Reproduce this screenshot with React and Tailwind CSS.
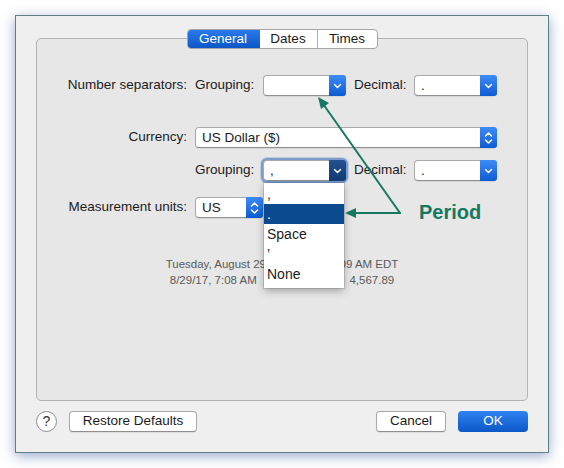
import React from "react";

const font = { fontFamily: '"Helvetica Neue", "Liberation Sans", Arial, sans-serif' };

function Chevron() {
  return (
    <svg width="9" height="6" viewBox="0 0 9 6">
      <polyline points="1.5,1.5 4.5,4.5 7.5,1.5" fill="none" stroke="white" strokeWidth="1.5" strokeLinecap="round" strokeLinejoin="round" />
    </svg>
  );
}

function Stepper() {
  return (
    <svg width="9" height="14" viewBox="0 0 9 14">
      <polyline points="1.5,5 4.5,2 7.5,5" fill="none" stroke="white" strokeWidth="1.5" strokeLinecap="round" strokeLinejoin="round" />
      <polyline points="1.5,9 4.5,12 7.5,9" fill="none" stroke="white" strokeWidth="1.5" strokeLinecap="round" strokeLinejoin="round" />
    </svg>
  );
}

function Popup({ value, width, stepper, focused, children }) {
  return (
    <div
      className={`relative flex h-[21px] rounded-[4px] border border-[#a9a9a9] border-b-[#8f8f8f] bg-white ${width} ${
        focused
          ? "shadow-[0_0_0_2px_#7d9ccb,0_0_0_3px_rgba(125,156,203,0.35)]"
          : "shadow-[0_1px_1px_rgba(0,0,0,0.08)]"
      }`}
    >
      <div className="flex-1 pl-[6px] text-[13.5px] leading-[19px] text-[#1b1b1b]">{value}</div>
      <div
        className={`-my-px -mr-px flex w-[17px] items-center justify-center rounded-r-[3px] ${
          focused ? "bg-gradient-to-b from-[#23508f] to-[#123a74]" : "bg-gradient-to-b from-[#3d8cf7] to-[#0b5bd3]"
        }`}
      >
        {stepper ? <Stepper /> : <Chevron />}
      </div>
      {children}
    </div>
  );
}

function Menu() {
  const items = [",", ".", "Space", "\u2019", "None"];
  return (
    <div className="absolute left-0 top-[22px] z-20 w-[80px] bg-white pt-px pb-[4px] shadow-[0_3px_8px_rgba(0,0,0,0.3),0_0_0_1px_rgba(0,0,0,0.12)]">
      {items.map((it, i) => (
        <div
          key={it}
          className={`h-5 pl-[3px] text-[14px] leading-5 ${i === 1 ? "bg-[#0c4a8f] text-white" : "text-[#1b1b1b]"}`}
        >
          {it}
        </div>
      ))}
    </div>
  );
}

function Button({ children, primary, className = "" }) {
  return (
    <div
      className={`flex h-[21px] items-center justify-center rounded-[4px] text-[13.5px] ${
        primary
          ? "bg-gradient-to-b from-[#2f82f2] to-[#0a57c7] text-white"
          : "border border-[#a9a9a9] border-b-[#8f8f8f] bg-white text-[#1b1b1b] shadow-[0_1px_1px_rgba(0,0,0,0.08)]"
      } ${className}`}
    >
      {children}
    </div>
  );
}

export default function App() {
  return (
    <div className="relative h-[468px] w-[564px] overflow-hidden bg-white" style={font}>
      {/* dialog window */}
      <div className="ml-[15px] mt-[15px] flex h-[438px] w-[534px] flex-col border border-[#5e7f85] bg-[#efefef] px-[20px] pt-[13px] shadow-[0_3px_12px_rgba(70,100,160,0.55)]">
        {/* segmented tabs */}
        <div className="relative z-10 flex justify-center">
          <div className="flex h-5 overflow-hidden rounded-[4px] border border-[#a5a5a5] bg-white text-[13.5px] leading-[18px]">
            <div className="-my-px -ml-px w-[73px] bg-gradient-to-b from-[#2a7cf0] to-[#0a55c3] pt-px text-center text-white">General</div>
            <div className="w-[58px] border-r border-[#b0b0b0] text-center text-[#1b1b1b]">Dates</div>
            <div className="w-[59px] text-center text-[#1b1b1b]">Times</div>
          </div>
        </div>

        {/* group box */}
        <div className="relative -mt-[11px] h-[363px] rounded-[5px] border border-[#b3b3b3] bg-[#e7e7e7] pt-[36px] text-[13.5px] text-[#1b1b1b]">
          <div className="flex items-center">
            <div className="w-[150px] text-right">Number separators:</div>
            <div className="ml-[8px] w-[59px] text-right">Grouping:</div>
            <div className="ml-[9px]"><Popup value="" width="w-[83px]" /></div>
            <div className="ml-[8px] w-[52px]">Decimal:</div>
            <div className="ml-[8px]"><Popup value="." width="w-[83px]" /></div>
          </div>

          <div className="mt-[31px] flex items-center">
            <div className="w-[150px] text-right">Currency:</div>
            <div className="ml-[8px]"><Popup value="US Dollar ($)" width="w-[302px]" stepper /></div>
          </div>

          <div className="mt-[12px] flex items-center">
            <div className="w-[150px]" />
            <div className="ml-[8px] w-[59px] text-right">Grouping:</div>
            <div className="ml-[9px]">
              <Popup value="," width="w-[83px]" focused>
                <Menu />
              </Popup>
            </div>
            <div className="ml-[8px] w-[52px]">Decimal:</div>
            <div className="ml-[8px]"><Popup value="." width="w-[83px]" /></div>
          </div>

          <div className="mt-[16px] flex items-center">
            <div className="w-[150px] text-right">Measurement units:</div>
            <div className="ml-[8px]"><Popup value="US" width="w-[68px]" stepper /></div>
          </div>

          <div className="mt-[38px] text-center text-[11.5px] leading-[16px] text-[#5a5a5a]">
            <div>Tuesday, August 29, 2017 at 7:08:09 AM EDT</div>
            <div>8/29/17, 7:08 AM&nbsp;&nbsp;&nbsp;$1,234,567.89&nbsp;&nbsp;&nbsp;4,567.89</div>
          </div>
        </div>

        {/* footer buttons */}
        <div className="mt-[10px] flex items-center">
          <div className="flex h-[21px] w-[21px] items-center justify-center rounded-full border border-[#8c8c8c] bg-white text-[14px] text-[#333]">?</div>
          <Button className="ml-[12px] w-[128px]">Restore Defaults</Button>
          <div className="flex-1" />
          <Button className="w-[70px]">Cancel</Button>
          <Button primary className="ml-[12px] w-[70px]">OK</Button>
        </div>
      </div>

      {/* callout arrows */}
      <svg className="pointer-events-none absolute inset-0 z-30" width="564" height="468">
        <g stroke="#16795f" strokeWidth="2" fill="none" strokeLinecap="round">
          <line x1="400" y1="213" x2="348" y2="213" />
          <line x1="400" y1="213" x2="321" y2="101" />
        </g>
        <polygon points="345,213 356,208 356,218" fill="#16795f" />
        <polygon points="318,97 321,109 329,103" fill="#16795f" />
      </svg>
      <div className="absolute left-[419px] top-[200px] z-30 text-[20px] font-bold leading-6 text-[#16795f]">Period</div>
    </div>
  );
}
